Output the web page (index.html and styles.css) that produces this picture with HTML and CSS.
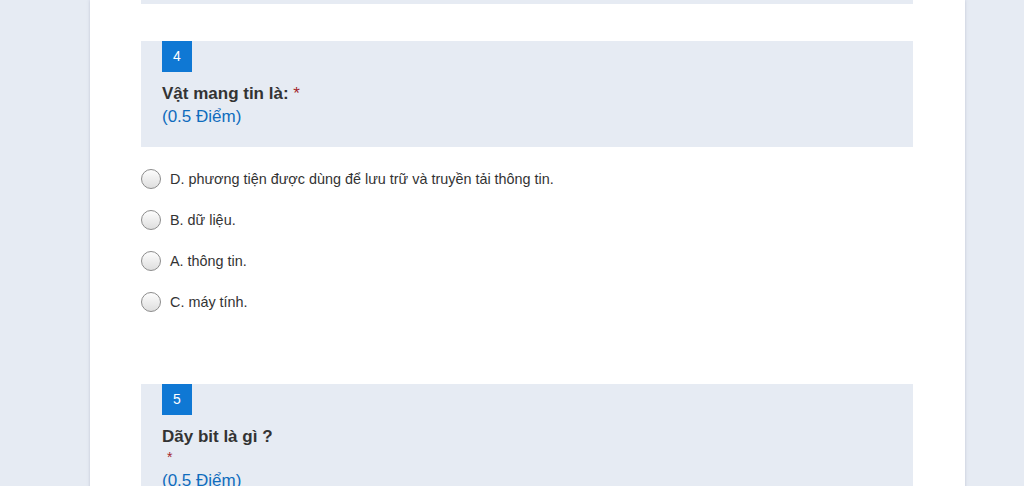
FILE: index.html
```html
<!DOCTYPE html>
<html lang="vi">
<head>
  <meta charset="UTF-8">
  <meta name="viewport" content="width=device-width, initial-scale=1.0">
  <link rel="stylesheet" href="styles.css">
  <title>Biểu mẫu</title>
</head>
<body>
  <div id="form-card">
    <div class="question-head prev-head"></div>

    <div class="question">
      <div class="question-head">
        <div class="badge">4</div>
        <div class="question-title">Vật mang tin là: <span class="required">*</span></div>
        <div class="points">(0.5 Điểm)</div>
      </div>
      <div class="choices">
        <label class="choice"><span class="radio"></span>D. phương tiện được dùng để lưu trữ và truyền tải thông tin.</label>
        <label class="choice"><span class="radio"></span>B. dữ liệu.</label>
        <label class="choice"><span class="radio"></span>A. thông tin.</label>
        <label class="choice"><span class="radio"></span>C. máy tính.</label>
      </div>
    </div>

    <div class="question">
      <div class="question-head">
        <div class="badge">5</div>
        <div class="question-title">Dãy bit là gì ?</div>
        <div class="required required-line">*</div>
        <div class="points">(0.5 Điểm)</div>
      </div>
    </div>
  </div>
</body>
</html>
```

FILE: styles.css
```css
body {
  margin: 0;
  background-color: #e6ebf3;
  font-family: 'Liberation Sans', Arial, sans-serif;
  color: #333;
  overflow: hidden;
}

#form-card {
  margin-left: 90px;
  width: 875px;
  min-height: 486px;
  background-color: white;
  padding: 0 52px 0 51px;
  box-sizing: border-box;
  box-shadow: 0 0 3px rgba(120, 130, 160, 0.35);
}

.question-head {
  background-color: #e6ebf3;
  padding: 0 21px 18px 21px;
}

.prev-head {
  height: 4px;
  padding: 0;
  margin-bottom: 37px;
}

.badge {
  width: 30px;
  height: 31px;
  line-height: 31px;
  text-align: center;
  background-color: #0f78d4;
  color: white;
  font-size: 14px;
}

.question-title {
  margin-top: 11px;
  font-size: 17px;
  font-weight: bold;
  line-height: 22px;
}

.required {
  color: #a4262c;
  font-weight: normal;
}

.required-line {
  font-size: 14px;
  padding-left: 5px;
  line-height: 18px;
  margin-bottom: 3px;
}

.points {
  color: #0f6cbd;
  font-size: 17px;
  line-height: 24px;
}

.choices {
  padding: 11px 0 62px 0;
}

.choice {
  display: flex;
  align-items: center;
  height: 41px;
  font-size: 14.4px;
  color: #333;
}

.radio {
  width: 18px;
  height: 18px;
  border: 1px solid #8c8c8c;
  border-radius: 50%;
  background: linear-gradient(#fdfdfd, #dedede);
  margin-right: 9px;
}
```
